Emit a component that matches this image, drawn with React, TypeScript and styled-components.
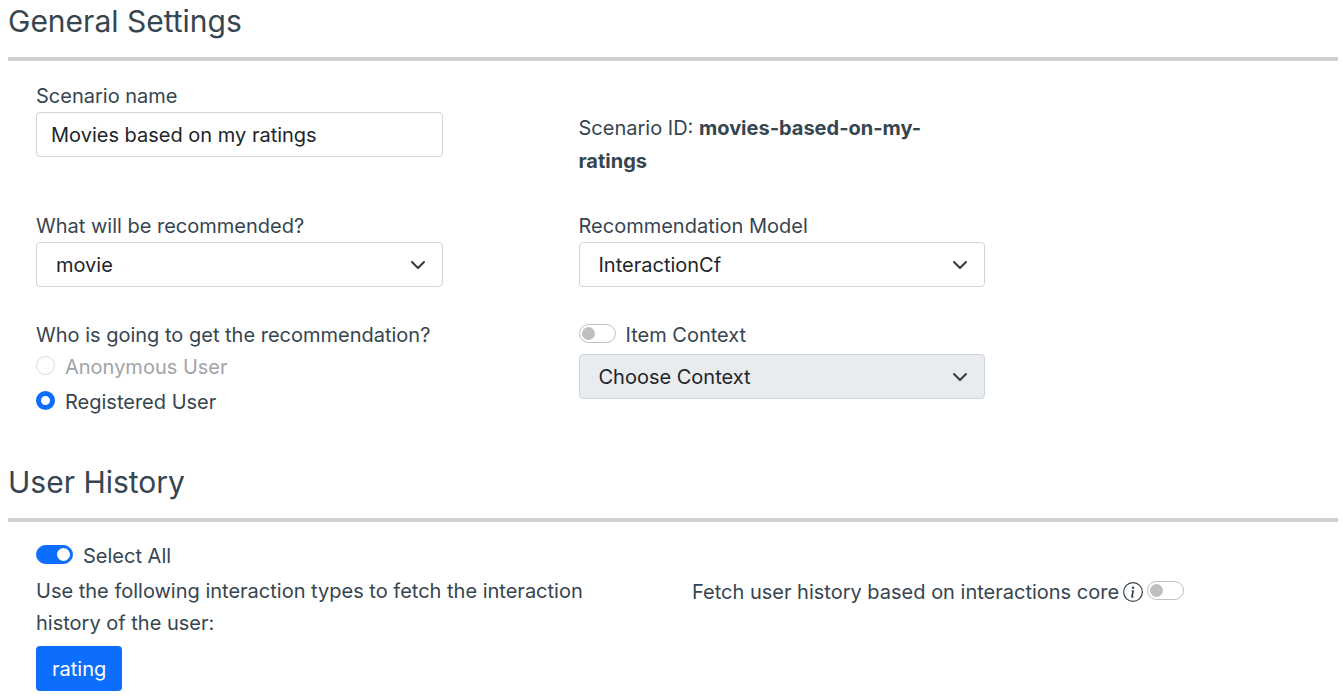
import React, { useState } from "react";
import styled, { createGlobalStyle } from "styled-components";
import { BsInfoCircle } from "react-icons/bs";

const GlobalStyle = createGlobalStyle`
  *, *::before, *::after { box-sizing: border-box; }
  body {
    margin: 0;
    background: #fff;
    color: #36454f;
    font-family: Inter, "Open Sans", sans-serif;
    font-size: 20px;
    line-height: 32px;
  }
`;

const Page = styled.main`
  padding: 0 4px 4px 8px;
`;

const Section = styled.section`
  & + & { margin-top: 43px; }
`;

const Title = styled.h2`
  margin: 0;
  padding: 4px 0 19px;
  border-bottom: 4px solid #cdd0d3;
  font-size: 30px;
  font-weight: 400;
  line-height: 34px;
`;

const Settings = styled.div`
  display: grid;
  grid-template-columns: 5fr 5fr 2fr;
  row-gap: 32px;
  padding: 19px 0 0 28px;
`;

const Cell = styled.div<{ $first?: boolean }>`
  grid-column: ${(p) => (p.$first ? 1 : 2)};
  width: 75%;
`;

const ScenarioId = styled(Cell)`
  padding-top: 32px;
  line-height: 33px;
`;

const RowsBlock = styled.div`
  display: flex;
  flex-direction: column;
  gap: 3px;
`;

const FieldLabel = styled.label`
  display: block;
  white-space: nowrap;
`;

const TextInput = styled.input`
  display: block;
  width: 100%;
  height: 45px;
  padding: 0 14px;
  border: 1px solid #ced4da;
  border-radius: 4px;
  background: #fff;
  color: #212529;
  font: inherit;
`;

const SelectBox = styled.div`
  position: relative;

  svg {
    position: absolute;
    top: 50%;
    right: 17px;
    width: 16px;
    height: 16px;
    margin-top: -8px;
    pointer-events: none;
  }
`;

const SelectInput = styled.select`
  appearance: none;
  display: block;
  width: 100%;
  height: 45px;
  padding: 0 48px 0 19px;
  border: 1px solid #ced4da;
  border-radius: 4px;
  background: #fff;
  color: #212529;
  font: inherit;

  &:disabled {
    background: #e9ecef;
    opacity: 1;
  }
`;

const Fieldset = styled.fieldset`
  margin: 0;
  padding: 0;
  border: 0;
`;

const Legend = styled.legend`
  padding: 0;
  white-space: nowrap;
`;

const CheckRow = styled.label<{ $disabled?: boolean }>`
  display: flex;
  align-items: center;
  gap: 10px;
  color: ${(p) => (p.$disabled ? "#9fa4a9" : "inherit")};
`;

const Radio = styled.input`
  appearance: none;
  flex: none;
  width: 19px;
  height: 19px;
  margin: 0 0 3px;
  border: 1px solid #bfbfbf;
  border-radius: 50%;
  background: #fff;

  &:checked {
    border: 5px solid #0d6efd;
  }
  &:disabled {
    opacity: 0.5;
  }
`;

const Switch = styled.input`
  appearance: none;
  display: flex;
  align-items: center;
  flex: none;
  width: 37px;
  height: 19px;
  margin: 0 0 3px;
  padding: 0 2px;
  border: 1px solid #bfbfbf;
  border-radius: 10px;
  background: #fff;

  &::before {
    content: "";
    width: 13px;
    height: 13px;
    border-radius: 50%;
    background: #bfbfbf;
  }
  &:checked {
    justify-content: flex-end;
    border-color: #0d6efd;
    background: #0d6efd;
  }
  &:checked::before {
    background: #fff;
  }
`;

const History = styled.div`
  display: grid;
  grid-template-columns: 1fr 1fr;
  column-gap: 10px;
  padding: 18px 0 0 28px;
`;

const HistoryText = styled.p`
  margin: 3px 0 7px;
  max-width: 600px;
`;

const CoreOption = styled.div`
  display: flex;
  align-items: center;
  align-self: start;
  gap: 4px;
  margin-top: 36px;

  svg {
    flex: none;
    width: 20px;
    height: 20px;
  }
`;

const TypeButton = styled.button`
  height: 45px;
  padding: 0 16px;
  border: 0;
  border-radius: 4px;
  background: #0d6efd;
  color: #fff;
  font: inherit;
`;

function Select(props: { id: string; options: string[]; disabled?: boolean; label?: string }) {
  return (
    <SelectBox>
      <SelectInput id={props.id} disabled={props.disabled} aria-label={props.label}>
        {props.options.map((o) => (
          <option key={o}>{o}</option>
        ))}
      </SelectInput>
      <svg viewBox="0 0 16 16" fill="none" stroke="#343a40" strokeWidth="2" strokeLinecap="round" strokeLinejoin="round" aria-hidden="true">
        <path d="m2 5 6 6 6-6" />
      </svg>
    </SelectBox>
  );
}

export default function App() {
  const [itemContext, setItemContext] = useState(false);
  return (
    <Page>
      <GlobalStyle />
      <Section>
        <Title>General Settings</Title>
        <Settings>
          <Cell $first>
            <FieldLabel htmlFor="name">Scenario name</FieldLabel>
            <TextInput id="name" type="text" defaultValue="Movies based on my ratings" />
          </Cell>
          <ScenarioId>
            Scenario ID: <strong>movies-based-on-my-ratings</strong>
          </ScenarioId>
          <Cell $first>
            <FieldLabel htmlFor="item-type">What will be recommended?</FieldLabel>
            <Select id="item-type" options={["movie"]} />
          </Cell>
          <Cell>
            <FieldLabel htmlFor="model">Recommendation Model</FieldLabel>
            <Select id="model" options={["InteractionCf"]} />
          </Cell>
          <Cell $first>
            <Fieldset>
              <Legend>Who is going to get the recommendation?</Legend>
              <RowsBlock>
                <CheckRow $disabled>
                  <Radio type="radio" name="target" disabled />
                  Anonymous User
                </CheckRow>
                <CheckRow>
                  <Radio type="radio" name="target" defaultChecked />
                  Registered User
                </CheckRow>
              </RowsBlock>
            </Fieldset>
          </Cell>
          <Cell>
            <RowsBlock>
              <CheckRow>
                <Switch
                  type="checkbox"
                  role="switch"
                  checked={itemContext}
                  onChange={(e) => setItemContext(e.target.checked)}
                />
                Item Context
              </CheckRow>
              <Select id="context" label="Context" options={["Choose Context"]} disabled={!itemContext} />
            </RowsBlock>
          </Cell>
        </Settings>
      </Section>
      <Section>
        <Title>User History</Title>
        <History>
          <div>
            <CheckRow>
              <Switch type="checkbox" role="switch" defaultChecked />
              Select All
            </CheckRow>
            <HistoryText>
              Use the following interaction types to fetch the interaction history of the user:
            </HistoryText>
            <TypeButton type="button">rating</TypeButton>
          </div>
          <CoreOption>
            <label htmlFor="core">Fetch user history based on interactions core</label>
            <BsInfoCircle aria-hidden="true" />
            <Switch id="core" type="checkbox" role="switch" />
          </CoreOption>
        </History>
      </Section>
    </Page>
  );
}
